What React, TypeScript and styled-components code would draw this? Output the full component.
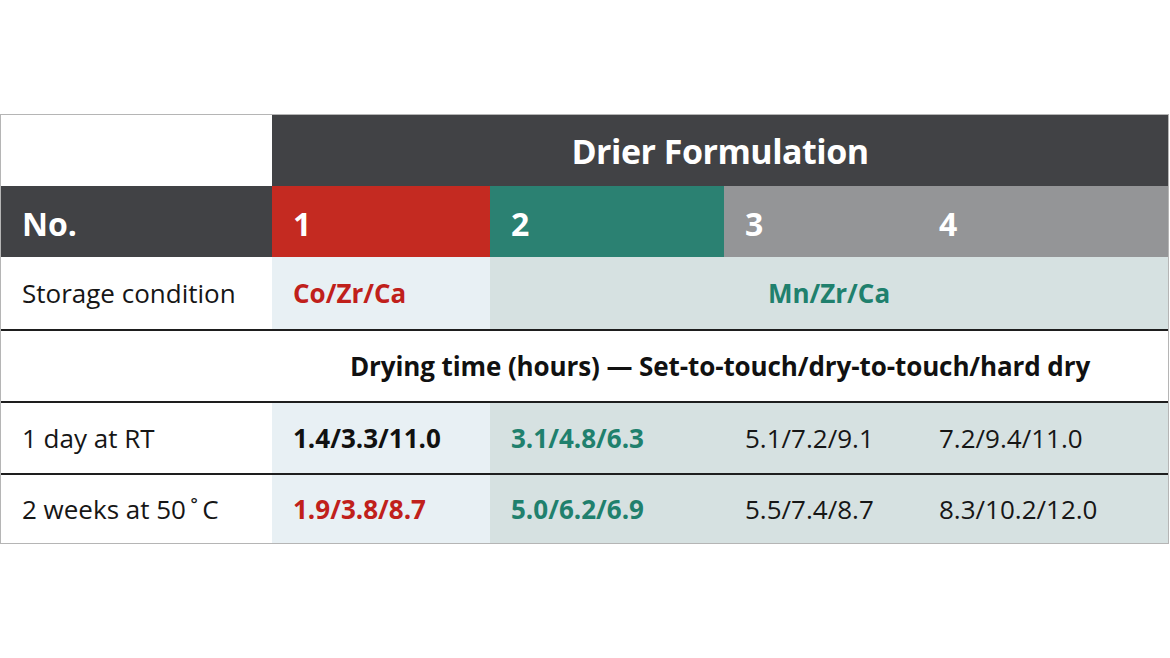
import React from 'react';
import styled, {createGlobalStyle} from "styled-components";

const GlobalStyle = createGlobalStyle`
  html, body {
    margin: 0;
    padding: 0;
    background: #ffffff;
  }
  body {
    font-family: "Open Sans", "DejaVu Sans", sans-serif;
  }
`;

const colors = {
  dark: '#414245',
  red: '#c42a21',
  green: '#2b8172',
  gray: '#949597',
  paleBlue: '#e8f0f4',
  paleGreen: '#d6e1e1',
  redText: '#c0201b',
  greenText: '#20806d',
  rule: '#1e1e1e',
};

type Row = {
  label: string;
  values: [string, string, string, string];
};

const rows: Row[] = [
  {label: '1 day at RT', values: ['1.4/3.3/11.0', '3.1/4.8/6.3', '5.1/7.2/9.1', '7.2/9.4/11.0']},
  {label: '2 weeks at 50\u2009˚\u2009C', values: ['1.9/3.8/8.7', '5.0/6.2/6.9', '5.5/7.4/8.7', '8.3/10.2/12.0']},
];

function App() {
  return (
      <>
        <GlobalStyle/>
        <Page>
          <Table>
            <Cell/>
            <Title $span={4}>Drier Formulation</Title>

            <HeadCell $bg={colors.dark}>No.</HeadCell>
            <HeadCell $bg={colors.red}>1</HeadCell>
            <HeadCell $bg={colors.green}>2</HeadCell>
            <HeadCell $bg={colors.gray}>3</HeadCell>
            <HeadCell $bg={colors.gray}>4</HeadCell>

            <Cell>Storage condition</Cell>
            <Cell $bg={colors.paleBlue} $color={colors.redText} $bold>Co/Zr/Ca</Cell>
            <Cell $bg={colors.paleGreen} $color={colors.greenText} $bold $span={3} $center>Mn/Zr/Ca</Cell>

            <Cell $rule/>
            <Caption $span={4} $rule>
              Drying time (hours) — Set-to-touch/dry-to-touch/hard dry
            </Caption>

            {rows.map((row, i) => (
                <React.Fragment key={row.label}>
                  <Cell $rule>{row.label}</Cell>
                  <Cell $rule $bg={colors.paleBlue} $bold $color={i === 0 ? '#111' : colors.redText}>
                    {row.values[0]}
                  </Cell>
                  <Cell $rule $bg={colors.paleGreen} $bold $color={colors.greenText}>{row.values[1]}</Cell>
                  <Cell $rule $bg={colors.paleGreen}>{row.values[2]}</Cell>
                  <Cell $rule $bg={colors.paleGreen}>{row.values[3]}</Cell>
                </React.Fragment>
            ))}
          </Table>
        </Page>
      </>
  );
}

const Page = styled.div`
  width: 1170px;
  height: 658px;
  padding-top: 114px;
  box-sizing: border-box;
`;

const Table = styled.div`
  display: grid;
  grid-template-columns: 271px 218px 234px 194px 250px;
  grid-template-rows: 71px 71px 72px 72px 72px 70px;
  width: 1169px;
  box-sizing: border-box;
  border: 1px solid #b5b5b5;
`;

type CellProps = {
  $bg?: string;
  $color?: string;
  $bold?: boolean;
  $span?: number;
  $center?: boolean;
  $rule?: boolean;
};

const Cell = styled.div<CellProps>`
  display: flex;
  align-items: center;
  justify-content: ${p => p.$center ? 'center' : 'flex-start'};
  box-sizing: border-box;
  padding-left: ${p => p.$center ? 0 : 21}px;
  grid-column: span ${p => p.$span ?? 1};
  background: ${p => p.$bg ?? '#ffffff'};
  color: ${p => p.$color ?? '#161616'};
  border-top: ${p => p.$rule ? `2px solid ${colors.rule}` : 'none'};
  font-size: 26px;
  font-weight: ${p => p.$bold ? 700 : 400};
  white-space: nowrap;
`;

const Title = styled(Cell)`
  justify-content: center;
  padding-left: 0;
  background: ${colors.dark};
  color: #ffffff;
  font-size: 34px;
  font-weight: 700;
  letter-spacing: -0.5px;
`;

const HeadCell = styled(Cell)`
  color: #ffffff;
  font-size: 32px;
  font-weight: 700;
  padding-top: 4px;
`;

const Caption = styled(Cell)`
  justify-content: center;
  padding-left: 0;
  font-size: 26px;
  font-weight: 700;
  letter-spacing: -0.1px;
  color: #111111;
`;

export default App;
